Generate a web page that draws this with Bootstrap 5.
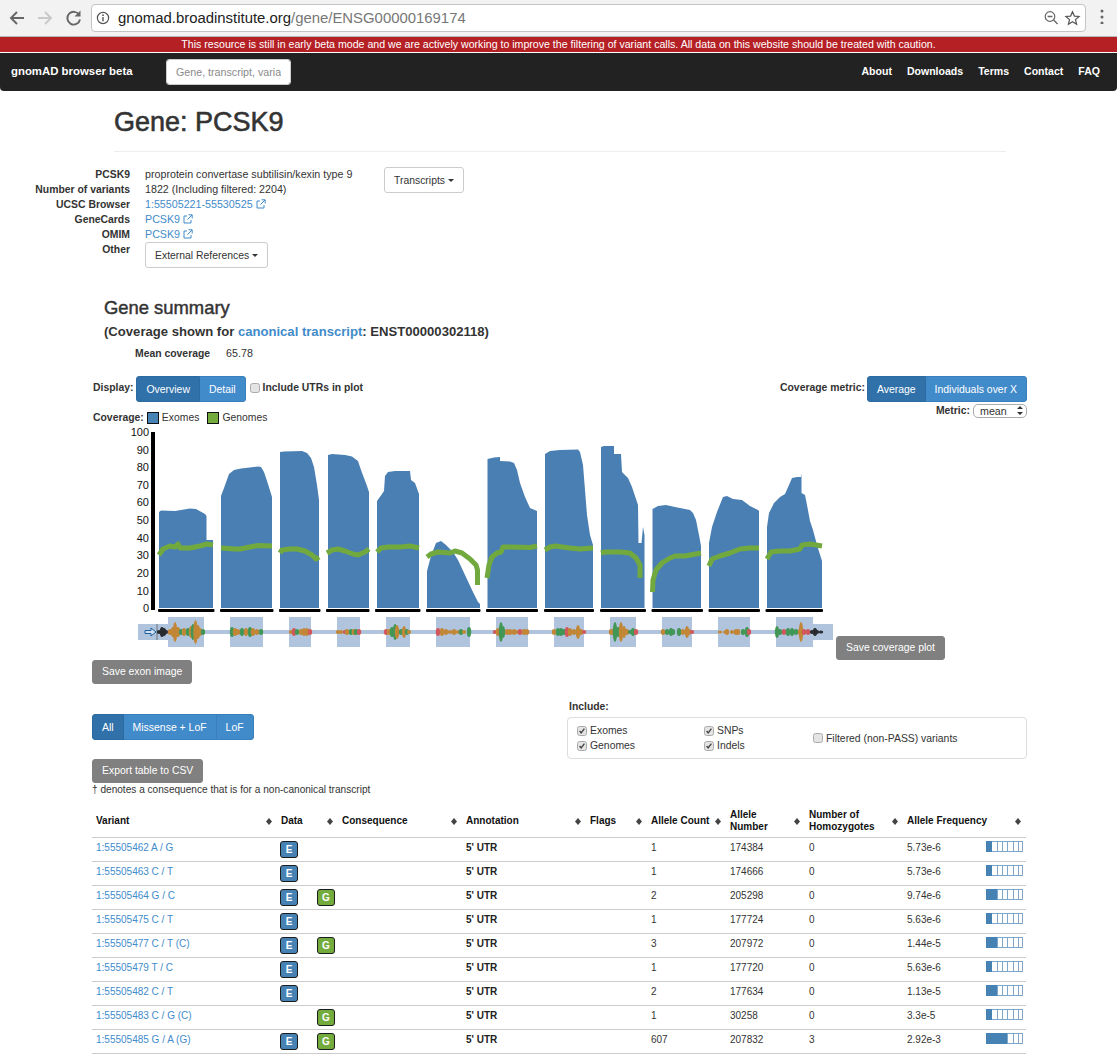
<!DOCTYPE html>
<html lang="en">
<head>
<meta charset="utf-8">
<title>gnomAD browser beta</title>
<link rel="stylesheet" href="https://cdn.jsdelivr.net/npm/bootstrap@5.3.0/dist/css/bootstrap.min.css">
<style>
html,body{height:1054px;overflow:hidden}
body{font-family:"Liberation Sans",Arial,sans-serif;font-size:10.7px;line-height:15px;color:#333;background:#fff}
a{color:#428bca;text-decoration:none}
.gx-chrome{height:37px;background:#f2f2f2;border-bottom:1px solid #b8b8b8;padding:4px 0 0 0}
.gx-nav-ic{width:91px;padding-left:9px;height:28px}
.gx-addr{width:995px;height:28px;background:#fff;border:1px solid #c4c4c4;border-radius:4px;font-size:14.9px;color:#777;padding:0 3px 0 4px}
.gx-addr b{font-weight:400;color:#222}
.gx-banner{height:15px;background:#b52025;color:#fff;text-align:center;line-height:15px;font-size:10.6px;margin-bottom:1px}
.gx-navbar{height:38px;background:#222;padding:0 17px 0 11px;border-radius:0 0 4px 4px;flex-wrap:nowrap}
.gx-navbar .navbar-brand{font-size:11.4px;font-weight:700;color:#fff;padding:0;margin:-2px 34px 0 0;width:121px}
.gx-search{width:125px;height:26px;font-size:10.7px;padding:0 9px;border-radius:3px;border:1px solid #ccc}
.gx-search::placeholder{color:#8a8a8a}
.gx-navbar .nav{gap:15px;margin-top:-2px}
.gx-navbar .nav-link{color:#fff;font-weight:700;font-size:10.55px;padding:0;line-height:15px}
.gx-head{margin:0 111px 0 114px;height:61px;border-bottom:1px solid #eee;padding-top:15px}
.gx-head h1{font-size:27px;line-height:32px;margin:0;font-weight:400;-webkit-text-stroke:.6px #333}
.gx-info{margin-top:15px;height:101px}
.gx-lab{width:130px;text-align:right;font-weight:700;font-size:10.4px;margin-right:15px;flex:none}
.gx-meta{width:239px}
.gx-btn{font-size:10.4px;line-height:15px;padding:5px 9px;height:26px;color:#333;background:#fff;border:1px solid #ccc;border-radius:3px}
.gx-btn.dropdown-toggle::after{border-top-width:3px;border-right-width:3px;border-left-width:3px;margin-left:3px;vertical-align:2px}
.gx-ext{width:10px;height:10px;margin-left:3px;vertical-align:-1px}
.gx-sum h2{font-size:18.4px;line-height:22px;margin:29px 0 0 104px;font-weight:400;-webkit-text-stroke:.45px #333}
.gx-sum h3{font-size:13.1px;line-height:18px;margin:4px 0 0 104px;font-weight:700;color:#333}
.gx-mean{margin:5px 0 0 135px;gap:16px;height:15px}
.gx-wrap{margin-left:92px;width:935px}
.gx-ctl{margin-top:15px;height:26px}
.gx-seg .btn{font-size:10.45px;line-height:15px;padding:5px 9px;height:26px;white-space:nowrap;--bs-btn-bg:#428bca;--bs-btn-border-color:#3a7fbb;--bs-btn-color:#fff;--bs-btn-active-bg:#3071a9;--bs-btn-active-border-color:#2c6a9f;--bs-btn-active-color:#fff;--bs-btn-hover-bg:#3a7fbb;border-radius:3px}
.gx-ctl label,.gx-b{font-weight:700;font-size:10.4px}
.gx-chk{width:10px;height:10px;margin:0;border:1px solid #aaa;background-color:#e4e4e4;border-radius:2px;flex:none}
.gx-chk:checked{background-color:#e4e4e4;border-color:#aaa;background-image:url("data:image/svg+xml,%3Csvg xmlns='http://www.w3.org/2000/svg' viewBox='0 0 10 10'%3E%3Cpath d='M2 5l2 2.5L8 2' fill='none' stroke='%23444' stroke-width='1.7'/%3E%3C/svg%3E");background-size:100%}
.gx-row2{margin-top:1px;height:20px}
.gx-legend{padding-top:9px;line-height:12px;margin-left:1px;font-size:10.4px}
.gx-swatch{width:12px;height:12px;border:1px solid #111;display:inline-block;margin-left:3px;margin-right:3px}
.gx-exlab{margin-right:5px}
.gx-select{width:54px;height:14px;font-size:10.7px;line-height:12px;padding:0 0 0 6px;border-radius:5px;border-color:#aaa;color:#333;background-size:8px 11px;background-position:right 2px center;background-image:url("data:image/svg+xml,%3Csvg xmlns='http://www.w3.org/2000/svg' viewBox='0 0 8 11'%3E%3Cpath d='M1 4l3-3 3 3zM1 7l3 3 3-3z' fill='%23333'/%3E%3C/svg%3E")}
.gx-plot{margin-top:1px;height:236px}
.gx-plot svg{flex:none;display:block}
.gx-grey{--bs-btn-bg:#808080;--bs-btn-border-color:#808080;--bs-btn-color:#fff;--bs-btn-hover-bg:#777;--bs-btn-hover-color:#fff;font-size:10.4px;line-height:14px;padding:4px 9px;height:24px;border-radius:3px}
.gx-filter{margin-top:15px;height:60px}
.gx-filter .gx-seg{margin-top:15px;height:26px}
.gx-inc{margin-left:auto;width:460px}
.gx-incbox{width:460px;height:42px;border:1px solid #ddd;border-radius:4px;margin-top:3px;padding:5px 9px;font-size:10.4px}
.gx-incbox .gx-opt{height:15px;gap:3px}
.gx-note{font-size:10.1px;line-height:14px;color:#333;margin-bottom:8px}
.gx-table{width:934px;table-layout:fixed;margin:0;font-size:10px;--bs-table-border-color:#ccc;--bs-table-color:#333}
.gx-table th{position:relative;height:32px;padding:1px 4px 0;font-weight:700;vertical-align:middle;line-height:12.5px;color:#111;border-bottom:1px solid #ccc}
.gx-table th::after{content:"";position:absolute;right:5px;top:13px;width:6px;height:7px;background:#444;clip-path:polygon(50% 0,100% 50%,50% 100%,0 50%)}
.gx-table td{height:24px;padding:2px 4px 0;line-height:15px;vertical-align:top;border-bottom:1px solid #ccc}
.gx-ann{font-weight:700;color:#222}
.gx-slots{display:flex;margin:1px 0 0 -1px}
.gx-slots span{width:37px;flex:none}
.gx-tag{display:block;width:18px!important;height:17px;border:1px solid #1c1c1c;border-radius:3px;color:#fff;font-weight:700;font-size:10px;line-height:15px;text-align:center}
.gx-e{background:#4682b4}
.gx-g{background:#73ab3d}
.gx-af{display:flex;justify-content:space-between}
.gx-af-bar{width:37px;height:11px;margin:1px -1px 0 0;border:1px solid #7fa5c9;background:repeating-linear-gradient(90deg,#fff 0 4.3px,#7fa5c9 4.3px 5.3px)}
.gx-af-bar i{display:block;height:11px;margin:-1px 0 0 -1px;background:#4682b4}
.gx-w1{width:6px}.gx-w2{width:11px}.gx-w4{width:21px}
</style>
</head>
<body>
<div class="gx-chrome d-flex align-items-start">
  <div class="gx-nav-ic d-flex align-items-center">
    <svg width="76" height="20" viewBox="0 0 76 20" fill="none" stroke-width="1.9">
      <path d="M15 10H2.5M8 4l-6 6 6 6" stroke="#666"/>
      <path d="M29 10h12M36 4l6 6-6 6" stroke="#c9c9c9"/>
      <path d="M70.300 7A6.400 6.400 0 1 0 71 11.500" stroke="#666"/>
      <path d="M71.500 2.500v6h-6z" fill="#666"/>
    </svg>
  </div>
  <div class="gx-addr d-flex align-items-center">
    <svg width="14" height="14" viewBox="0 0 14 14" fill="none" class="me-2 flex-none"><circle cx="7" cy="7" r="5.600" stroke="#555" stroke-width="1.200"/><path d="M7 6v4.200" stroke="#555" stroke-width="1.400"/><circle cx="7" cy="4.200" r=".9" fill="#555"/></svg>
    <span class="flex-grow-1"><b>gnomad.broadinstitute.org</b>/gene/ENSG00000169174</span>
    <svg width="38" height="16" viewBox="0 0 38 16" fill="none"><circle cx="6" cy="6.500" r="4.800" stroke="#666" stroke-width="1.200"/><path d="M3.600 6.500h4.800M9.600 10l4 4" stroke="#666" stroke-width="1.300"/><path d="M28.500 1.800l1.900 4.300 4.700.4-3.600 3.100 1.100 4.600-4.100-2.500-4.100 2.500 1.100-4.600-3.600-3.100 4.700-.4z" stroke="#555" stroke-width="1.200"/></svg>
  </div>
  <svg class="mt-1" style="margin-left:14px" width="4" height="16" viewBox="0 0 4 16"><circle cx="2" cy="3" r="1.500" fill="#666"/><circle cx="2" cy="9" r="1.500" fill="#666"/><circle cx="2" cy="15" r="1.500" fill="#666"/></svg>
</div>
<div class="gx-banner">This resource is still in early beta mode and we are actively working to improve the filtering of variant calls. All data on this website should be treated with caution.</div>
<nav class="navbar gx-navbar">
  <div class="d-flex align-items-center">
    <a class="navbar-brand" href="#">gnomAD browser beta</a>
    <input class="form-control gx-search" type="text" placeholder="Gene, transcript, variant">
  </div>
  <ul class="nav">
    <li class="nav-item"><a class="nav-link" href="#">About</a></li>
    <li class="nav-item"><a class="nav-link" href="#">Downloads</a></li>
    <li class="nav-item"><a class="nav-link" href="#">Terms</a></li>
    <li class="nav-item"><a class="nav-link" href="#">Contact</a></li>
    <li class="nav-item"><a class="nav-link" href="#">FAQ</a></li>
  </ul>
</nav>

<div class="gx-head"><h1>Gene: PCSK9</h1></div>

<div class="gx-info d-flex">
  <div class="gx-meta-wrap">
    <div class="d-flex"><div class="gx-lab">PCSK9</div><div class="gx-meta">proprotein convertase subtilisin/kexin type 9</div></div>
    <div class="d-flex"><div class="gx-lab">Number of variants</div><div class="gx-meta">1822 (Including filtered: 2204)</div></div>
    <div class="d-flex"><div class="gx-lab">UCSC Browser</div><div class="gx-meta"><a href="#">1:55505221-55530525<svg class="gx-ext" viewBox="0 0 10 10" fill="none" stroke="#428bca"><path d="M8 6v3H1V2h3M5.500 .8h3.700v3.700M9 1L4.500 5.500"/></svg></a></div></div>
    <div class="d-flex"><div class="gx-lab">GeneCards</div><div class="gx-meta"><a href="#">PCSK9<svg class="gx-ext" viewBox="0 0 10 10" fill="none" stroke="#428bca"><path d="M8 6v3H1V2h3M5.500 .8h3.700v3.700M9 1L4.500 5.500"/></svg></a></div></div>
    <div class="d-flex"><div class="gx-lab">OMIM</div><div class="gx-meta"><a href="#">PCSK9<svg class="gx-ext" viewBox="0 0 10 10" fill="none" stroke="#428bca"><path d="M8 6v3H1V2h3M5.500 .8h3.700v3.700M9 1L4.500 5.500"/></svg></a></div></div>
    <div class="d-flex"><div class="gx-lab">Other</div><div class="gx-meta"><button class="btn gx-btn dropdown-toggle" type="button" data-bs-toggle="dropdown">External References</button></div></div>
  </div>
  <div><button class="btn gx-btn dropdown-toggle" type="button" data-bs-toggle="dropdown">Transcripts</button></div>
</div>

<div class="gx-sum">
  <h2>Gene summary</h2>
  <h3>(Coverage shown for <a href="#">canonical transcript</a>: ENST00000302118)</h3>
  <div class="gx-mean d-flex"><span class="gx-b">Mean coverage</span><span>65.78</span></div>
</div>

<div class="gx-wrap">
  <div class="gx-ctl d-flex justify-content-between">
    <div class="d-flex align-items-start">
      <label style="margin:4px 3px 0 1px">Display:</label>
      <div class="btn-group gx-seg">
        <button class="btn btn-primary active" type="button">Overview</button>
        <button class="btn btn-primary" type="button">Detail</button>
      </div>
      <input class="form-check-input gx-chk" type="checkbox" style="margin:7px 3px 0 4px">
      <label style="margin-top:4px">Include UTRs in plot</label>
    </div>
    <div class="d-flex align-items-start">
      <label style="margin:4px 2px 0 0">Coverage metric:</label>
      <div class="btn-group gx-seg">
        <button class="btn btn-primary active" type="button">Average</button>
        <button class="btn btn-primary" type="button">Individuals over X</button>
      </div>
    </div>
  </div>
  <div class="gx-row2 d-flex justify-content-between align-items-start">
    <div class="gx-legend d-flex align-items-center">
      <span class="gx-b">Coverage:</span>
      <span class="gx-swatch gx-e"></span><span class="gx-exlab">Exomes</span>
      <span class="gx-swatch gx-g"></span><span>Genomes</span>
    </div>
    <div class="d-flex align-items-center">
      <span class="gx-b" style="margin-right:3px">Metric:</span>
      <select class="form-select gx-select"><option>mean</option></select>
    </div>
  </div>

  <div class="gx-plot d-flex align-items-end">
    <svg id="gx-chart" width="744" height="236" viewBox="92 424 744 236" role="img">
      <g font-family="Liberation Sans, Arial, sans-serif" font-size="11" fill="#111" text-anchor="end">
        <text x="149" y="436">100</text><text x="149" y="453.500">90</text><text x="149" y="471">80</text><text x="149" y="489">70</text><text x="149" y="506">60</text><text x="149" y="524">50</text><text x="149" y="541.500">40</text><text x="149" y="559">30</text><text x="149" y="577">20</text><text x="149" y="594.500">10</text><text x="149" y="612">0</text>
      </g>
      <rect x="151" y="432" width="4" height="178" fill="#000"/>
      <g fill="#4a7fb3">
        <path d="M159 608V512L161 510.500 175 511 190 508.500 196 509 205 514 206.500 516V540H213V608Z"/>
        <path d="M221 608V496L224 488 229 474 234 470 241 468.500 258 466.500 261 467 264 472 268 484 272 497V608Z"/>
        <path d="M280 608V452L284 451.500 302 451 307 453 311 458 314 467 317 485 319 500V608Z"/>
        <path d="M328 608V455L332 454 345 455 352 456.500 358 461 361 470 367 486 369 492V608Z"/>
        <path d="M377 608V501L382 494 384 491 385 476 388 472 395 471 410 471 411 480 415 483 419 494V608Z"/>
        <path d="M427 608V571L431 556 436 543 441 541 446 545 453 552 458 560 465 575 472 590 478 602 480 604V608Z"/>
        <path d="M487.500 608V459L494 457.500 500 457V461L510 461.500 514 463 517 470 520 483 525 497 530 508 537 511V608Z"/>
        <path d="M545 608V454L550 451 560 450 578 449.500 580 452 583 465 585 490 587 515 590 535 593 545V608Z"/>
        <path d="M601 608V447L604 446H614V454H621L622 472 628 478 632 487 638 505 638.500 543H641.500L643 527 644.500 535V608Z"/>
        <path d="M652.500 608V509L658 506 666 505 675 507 690 510 693 513 696 520 699 535 701 546V608Z"/>
        <path d="M709 608V543L712 527 717 512 723 497 727 496 733 499 742 500 750 506 758 510 759 511V608Z"/>
        <path d="M767 608V527L769 513 774 503 780 497 785 494 789 485 792 478 797 477 801 477V473L801.500 477V493L805 495 807 505 810 521 813 530 817 545 822 561V608Z"/>
      </g>
      <g fill="none" stroke="#72a93f" stroke-width="5" stroke-linejoin="round">
        <path d="M159 555L163 549 170 546 175 547 178 544 180 548 190 548 200 546 207 544 213 545"/>
        <path d="M221 548L235 549 240 549 250 547 258 545.500 272 546"/>
        <path d="M280 553L282 550 290 549 297 549 305 551 312 555 316 559 319 557"/>
        <path d="M327 553L332 550 338 549 345 551 353 554 358 555 365 552 369 549"/>
        <path d="M377 552L381 548 388 547 400 547 410 546 419 548"/>
        <path d="M427 557L431 554 438 552 450 553 455 551 462 553 470 559 476 565 477.500 570V585"/>
        <path d="M487 578L489 565 492 557 497 553 501 552 503 547 510 547 530 547.500 537 546"/>
        <path d="M545 550L550 547 555 546 570 548 580 549 593 548"/>
        <path d="M601 553L605 552 620 552 630 553 636 558 640 565V578"/>
        <path d="M652.500 592L653 580 656 570 662 563 670 558 675 556 685 556 701 553"/>
        <path d="M709 566L712 559 720 556 730 553 740 549 750 548 759 548"/>
        <path d="M767 559L771 552 780 551 790 551 800 549 802 545 810 544 822 546"/>
      </g>
      <g fill="#000">
        <rect x="158" y="609" width="56.500" height="3" rx="1"/><rect x="220" y="609" width="53.500" height="3" rx="1"/><rect x="279" y="609" width="41.500" height="3" rx="1"/><rect x="326" y="609" width="43.500" height="3" rx="1"/><rect x="375" y="609" width="45.500" height="3" rx="1"/><rect x="426" y="609" width="54.500" height="3" rx="1"/><rect x="486" y="609" width="52" height="3" rx="1"/><rect x="544" y="609" width="50" height="3" rx="1"/><rect x="600" y="609" width="46" height="3" rx="1"/><rect x="651.500" y="609" width="51.500" height="3" rx="1"/><rect x="708.500" y="609" width="51.500" height="3" rx="1"/><rect x="765.500" y="609" width="57.500" height="3" rx="1"/>
      </g>
      <g fill="#b0c4de">
        <rect x="138" y="630" width="695" height="4"/>
        <rect x="138" y="624" width="30" height="16"/><rect x="813" y="624" width="20" height="16"/>
        <rect x="168" y="617" width="36" height="30"/><rect x="230" y="617" width="33" height="30"/><rect x="289" y="617" width="22" height="30"/><rect x="337" y="617" width="23" height="30"/><rect x="386" y="617" width="24" height="30"/><rect x="436" y="617" width="34" height="30"/><rect x="496" y="617" width="32" height="30"/><rect x="554" y="617" width="30" height="30"/><rect x="610" y="617" width="26" height="30"/><rect x="662" y="617" width="30" height="30"/><rect x="718" y="617" width="32" height="30"/><rect x="776" y="617" width="37" height="30"/>
      </g>
      <path d="M145 630.500h6v-2.500l5 4-5 4v-2.500h-6z" fill="#cfe0f2" stroke="#1f5f9a"/>
      <rect x="156.500" y="624" width="1" height="16" fill="#6b7280"/>
      <g id="gx-dots" opacity=".85"></g>
    </svg>
    <button class="btn gx-grey" type="button">Save coverage plot</button>
  </div>
  <button class="btn gx-grey d-block" type="button">Save exon image</button>

  <div class="gx-filter d-flex">
    <div class="btn-group gx-seg">
      <button class="btn btn-primary active" type="button">All</button>
      <button class="btn btn-primary" type="button">Missense + LoF</button>
      <button class="btn btn-primary" type="button">LoF</button>
    </div>
    <div class="gx-inc flex-shrink-0">
      <div class="gx-b" style="margin-left:2px">Include:</div>
      <div class="gx-incbox d-flex">
        <div style="width:127px">
          <div class="gx-opt d-flex align-items-center"><input class="form-check-input gx-chk" type="checkbox" checked>Exomes</div>
          <div class="gx-opt d-flex align-items-center"><input class="form-check-input gx-chk" type="checkbox" checked>Genomes</div>
        </div>
        <div style="width:109px">
          <div class="gx-opt d-flex align-items-center"><input class="form-check-input gx-chk" type="checkbox" checked>SNPs</div>
          <div class="gx-opt d-flex align-items-center"><input class="form-check-input gx-chk" type="checkbox" checked>Indels</div>
        </div>
        <div class="gx-opt d-flex align-items-center align-self-center"><input class="form-check-input gx-chk" type="checkbox">Filtered (non-PASS) variants</div>
      </div>
    </div>
  </div>

  <button class="btn gx-grey d-block" type="button">Export table to CSV</button>
  <div class="gx-note">† denotes a consequence that is for a non-canonical transcript</div>

  <table class="table gx-table">
    <colgroup><col style="width:185px"><col style="width:61px"><col style="width:124px"><col style="width:124px"><col style="width:61px"><col style="width:79px"><col style="width:79px"><col style="width:98px"><col style="width:123px"></colgroup>
    <thead><tr><th>Variant</th><th>Data</th><th>Consequence</th><th>Annotation</th><th>Flags</th><th>Allele Count</th><th>Allele<br>Number</th><th>Number of<br>Homozygotes</th><th>Allele Frequency</th></tr></thead>
    <tbody>
      <tr><td><a href="#">1:55505462 A / G</a></td><td><div class="gx-slots"><span class="gx-tag gx-e">E</span></div></td><td></td><td class="gx-ann">5' UTR</td><td></td><td>1</td><td>174384</td><td>0</td><td><div class="gx-af">5.73e-6<div class="gx-af-bar"><i class="gx-w1"></i></div></div></td></tr>
      <tr><td><a href="#">1:55505463 C / T</a></td><td><div class="gx-slots"><span class="gx-tag gx-e">E</span></div></td><td></td><td class="gx-ann">5' UTR</td><td></td><td>1</td><td>174666</td><td>0</td><td><div class="gx-af">5.73e-6<div class="gx-af-bar"><i class="gx-w1"></i></div></div></td></tr>
      <tr><td><a href="#">1:55505464 G / C</a></td><td><div class="gx-slots"><span><b class="gx-tag gx-e">E</b></span><span><b class="gx-tag gx-g">G</b></span></div></td><td></td><td class="gx-ann">5' UTR</td><td></td><td>2</td><td>205298</td><td>0</td><td><div class="gx-af">9.74e-6<div class="gx-af-bar"><i class="gx-w2"></i></div></div></td></tr>
      <tr><td><a href="#">1:55505475 C / T</a></td><td><div class="gx-slots"><span class="gx-tag gx-e">E</span></div></td><td></td><td class="gx-ann">5' UTR</td><td></td><td>1</td><td>177724</td><td>0</td><td><div class="gx-af">5.63e-6<div class="gx-af-bar"><i class="gx-w1"></i></div></div></td></tr>
      <tr><td><a href="#">1:55505477 C / T (C)</a></td><td><div class="gx-slots"><span><b class="gx-tag gx-e">E</b></span><span><b class="gx-tag gx-g">G</b></span></div></td><td></td><td class="gx-ann">5' UTR</td><td></td><td>3</td><td>207972</td><td>0</td><td><div class="gx-af">1.44e-5<div class="gx-af-bar"><i class="gx-w2"></i></div></div></td></tr>
      <tr><td><a href="#">1:55505479 T / C</a></td><td><div class="gx-slots"><span class="gx-tag gx-e">E</span></div></td><td></td><td class="gx-ann">5' UTR</td><td></td><td>1</td><td>177720</td><td>0</td><td><div class="gx-af">5.63e-6<div class="gx-af-bar"><i class="gx-w1"></i></div></div></td></tr>
      <tr><td><a href="#">1:55505482 C / T</a></td><td><div class="gx-slots"><span class="gx-tag gx-e">E</span></div></td><td></td><td class="gx-ann">5' UTR</td><td></td><td>2</td><td>177634</td><td>0</td><td><div class="gx-af">1.13e-5<div class="gx-af-bar"><i class="gx-w2"></i></div></div></td></tr>
      <tr><td><a href="#">1:55505483 C / G (C)</a></td><td><div class="gx-slots"><span></span><span><b class="gx-tag gx-g">G</b></span></div></td><td></td><td class="gx-ann">5' UTR</td><td></td><td>1</td><td>30258</td><td>0</td><td><div class="gx-af">3.3e-5<div class="gx-af-bar"><i class="gx-w1"></i></div></div></td></tr>
      <tr><td><a href="#">1:55505485 G / A (G)</a></td><td><div class="gx-slots"><span><b class="gx-tag gx-e">E</b></span><span><b class="gx-tag gx-g">G</b></span></div></td><td></td><td class="gx-ann">5' UTR</td><td></td><td>607</td><td>207832</td><td>3</td><td><div class="gx-af">2.92e-3<div class="gx-af-bar"><i class="gx-w4"></i></div></div></td></tr>
    </tbody>
  </table>
</div>

<script src="https://cdn.jsdelivr.net/npm/bootstrap@5.3.0/dist/js/bootstrap.bundle.min.js"></script>
<script>
(function(){
  var c={o:'#c47d1a',g:'#2f8f3f',r:'#d84545',k:'#111'};
  var d='159,2,k 162,5,k 164,4,k 166,2,k 170,3,o 173,5,o 175,10,o 178,5,o 181,3,g 184,4,o 188,4,g 191,6,o 193,8,g 195.5,12,o 198,7,o 200,4,o 203,3,g '+
  '232,5,g 235,4,o 238,3,o 242,4,g 246,4,o 250,5,g 253,4,o 257,3,o 261,3,g '+
  '291,2,o 294,4,r 297,3,g 301,3,o 304,4,o 307,4,o 310,3,r '+
  '338,2,o 341,2,o 345,2,r 347,3,o 351,3,g 354,3,o 356,3,g 359,3,r '+
  '386,3,r 389,3,o 392,5,g 395,8,g 397,7,o 401,3,g 404,6,o 407,3,g 409,2,o '+
  '438,4,r 442,4,o 446,3,o 450,2,o 454,3,o 458,2,o 461,3,g 464,2,o 469,5,g '+
  '495,2,r 498,4,o 501,10,g 503,6,g 507,3,o 510,3,o 514,3,o 517,2,o 520,3,r 524,3,o 527,3,o '+
  '554,3,o 558,4,g 561,4,g 564,3,g 567,5,r 570,4,o 574,3,o 578,7,o 581,3,o 584,2,r '+
  '611,3,o 614,4,o 615,10,g 618,5,g 621,10,o 624,6,o 627,3,o 630,2,g 633,4,g 636,3,r '+
  '663,3,o 667,3,g 671,4,g 673,3,g 679,4,g 683,3,o 687,6,o 689,3,o 692,2,r '+
  '720,1.5,o 725,1.5,o 727,3,o 732,2,o 736,3,o 738,3,o 743,3,g 747,5,g 749,3,r '+
  '777,6,g 780,3,g 784,3,r 788,4,g 792,4,g 796,3,g 800,3,o 801,10,o 804,3,r 808,3,r 812,2,k 815,4,k 817,2,k 821,1.5,k';
  var g=document.getElementById('gx-dots');
  d.split(' ').forEach(function(s){
    var p=s.split(',');
    var e=document.createElementNS('http://www.w3.org/2000/svg','ellipse');
    e.setAttribute('cx',p[0]);e.setAttribute('cy',632);e.setAttribute('rx',2.2);e.setAttribute('ry',p[1]);e.setAttribute('fill',c[p[2]]);
    g.appendChild(e);
  });
})();
</script>
</body>
</html>
